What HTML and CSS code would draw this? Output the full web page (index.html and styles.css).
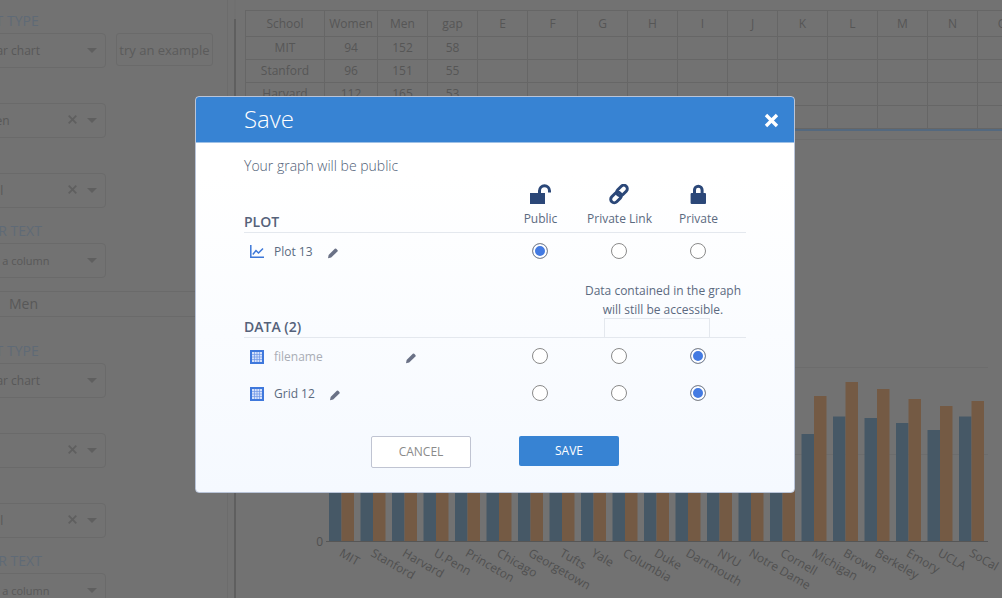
FILE: index.html
```html
<!DOCTYPE html>
<html>
	<head>
		<meta http-equiv="Content-Type" content="text/html; charset=UTF-8" />
		<title>Save</title>
		<link rel="stylesheet" href="styles.css">
	</head>

	<body>
		<div class="page">
			<aside class="sidebar">
				<div class="sidebar-inner">
					<div class="field">
						<div class="field-label">PLOT TYPE</div>
						<div class="field-row">
							<div class="select select-type"><span class="value">Basic bar chart</span><i class="caret"></i></div>
							<button class="example">try an example</button>
						</div>
					</div>
					<div class="field">
						<div class="field-label">X</div>
						<div class="select"><span class="value">Women</span>
							<svg class="clear" width="9" height="9" viewBox="0 0 9 9"><path d="M.7.7l7.6 7.6M8.3.7L.7 8.3" /></svg><i class="caret"></i></div>
					</div>
					<div class="field">
						<div class="field-label">Y</div>
						<div class="select"><span class="value">School</span>
							<svg class="clear" width="9" height="9" viewBox="0 0 9 9"><path d="M.7.7l7.6 7.6M8.3.7L.7 8.3" /></svg><i class="caret"></i></div>
					</div>
					<div class="field">
						<div class="field-label field-label-hover">HOVER TEXT</div>
						<div class="select"><span class="value placeholder">Select a column</span><i class="caret"></i></div>
					</div>
					<div class="trace-name">Men</div>
					<div class="field">
						<div class="field-label">PLOT TYPE</div>
						<div class="field-row">
							<div class="select select-type"><span class="value">Basic bar chart</span><i class="caret"></i></div>
						</div>
					</div>
					<div class="field">
						<div class="field-label">X</div>
						<div class="select"><span class="value">Men</span>
							<svg class="clear" width="9" height="9" viewBox="0 0 9 9"><path d="M.7.7l7.6 7.6M8.3.7L.7 8.3" /></svg><i class="caret"></i></div>
					</div>
					<div class="field">
						<div class="field-label">Y</div>
						<div class="select"><span class="value">School</span>
							<svg class="clear" width="9" height="9" viewBox="0 0 9 9"><path d="M.7.7l7.6 7.6M8.3.7L.7 8.3" /></svg><i class="caret"></i></div>
					</div>
					<div class="field">
						<div class="field-label field-label-hover">HOVER TEXT</div>
						<div class="select"><span class="value placeholder">Select a column</span><i class="caret"></i></div>
					</div>
				</div>
			</aside>
			<div class="scrollbar"></div>

			<main class="workspace">
				<table class="sheet">
					<tr><th>School</th><th>Women</th><th>Men</th><th>gap</th><th>E</th><th>F</th><th>G</th><th>H</th><th>I</th><th>J</th><th>K</th><th>L</th><th>M</th><th>N</th><th>O</th></tr>
					<tr><td>MIT</td><td>94</td><td>152</td><td>58</td><td></td><td></td><td></td><td></td><td></td><td></td><td></td><td></td><td></td><td></td><td></td></tr>
					<tr><td>Stanford</td><td>96</td><td>151</td><td>55</td><td></td><td></td><td></td><td></td><td></td><td></td><td></td><td></td><td></td><td></td><td></td></tr>
					<tr><td>Harvard</td><td>112</td><td>165</td><td>53</td><td></td><td></td><td></td><td></td><td></td><td></td><td></td><td></td><td></td><td></td><td></td></tr>
					<tr><td>U.Penn</td><td>92</td><td>141</td><td>49</td><td></td><td></td><td></td><td></td><td></td><td></td><td></td><td></td><td></td><td></td><td></td></tr>
				</table>
				<div class="sheet-handle"></div>

				<svg class="chart" width="766" height="458" viewBox="236 140 766 458">
					<g class="grid-lines">
						<path d="M329 367.5H988M329 454.5H988" />
					</g>
					<g class="bars-women">
						<rect x="329" y="459" width="12.5" height="82" />
						<rect x="360.5" y="457" width="12.5" height="84" />
						<rect x="392" y="444" width="12.5" height="97" />
						<rect x="423.5" y="461" width="12.5" height="80" />
						<rect x="455" y="463" width="12.5" height="78" />
						<rect x="486.5" y="473" width="12.5" height="68" />
						<rect x="518" y="459" width="12.5" height="82" />
						<rect x="549.5" y="475" width="12.5" height="66" />
						<rect x="581" y="472" width="12.5" height="69" />
						<rect x="612.5" y="466" width="12.5" height="75" />
						<rect x="644" y="460" width="12.5" height="81" />
						<rect x="675.5" y="468" width="12.5" height="73" />
						<rect x="707" y="483" width="12.5" height="58" />
						<rect x="738.5" y="477" width="12.5" height="64" />
						<rect x="770" y="478" width="12.5" height="63" />
						<rect x="801.5" y="434" width="12.5" height="107" />
						<rect x="833" y="416.5" width="12.5" height="124.5" />
						<rect x="864.5" y="418" width="12.5" height="123" />
						<rect x="896" y="423" width="12.5" height="118" />
						<rect x="927.5" y="430" width="12.5" height="111" />
						<rect x="959" y="416.5" width="12.5" height="124.5" />
					</g>
					<g class="bars-men">
						<rect x="341.5" y="409" width="12.5" height="132" />
						<rect x="373" y="410" width="12.5" height="131" />
						<rect x="404.5" y="397" width="12.5" height="144" />
						<rect x="436" y="418" width="12.5" height="123" />
						<rect x="467.5" y="422" width="12.5" height="119" />
						<rect x="499" y="438" width="12.5" height="103" />
						<rect x="530.5" y="427" width="12.5" height="114" />
						<rect x="562" y="444" width="12.5" height="97" />
						<rect x="593.5" y="442" width="12.5" height="99" />
						<rect x="625" y="437" width="12.5" height="104" />
						<rect x="656.5" y="433" width="12.5" height="108" />
						<rect x="688" y="442" width="12.5" height="99" />
						<rect x="719.5" y="459" width="12.5" height="82" />
						<rect x="751" y="454" width="12.5" height="87" />
						<rect x="782.5" y="455" width="12.5" height="86" />
						<rect x="814" y="396" width="12.5" height="145" />
						<rect x="845.5" y="382" width="12.5" height="159" />
						<rect x="877" y="389" width="12.5" height="152" />
						<rect x="908.5" y="399" width="12.5" height="142" />
						<rect x="940" y="406" width="12.5" height="135" />
						<rect x="971.5" y="401" width="12.5" height="140" />
					</g>
					<path class="axis" d="M326 541.5H988" />
					<g class="tick-labels">
						<text x="323" y="546" text-anchor="end">0</text>
						<text transform="translate(338.5 555.5) rotate(30)">MIT</text>
						<text transform="translate(370 555.5) rotate(30)">Stanford</text>
						<text transform="translate(401.5 555.5) rotate(30)">Harvard</text>
						<text transform="translate(433 555.5) rotate(30)">U.Penn</text>
						<text transform="translate(464.5 555.5) rotate(30)">Princeton</text>
						<text transform="translate(496 555.5) rotate(30)">Chicago</text>
						<text transform="translate(527.5 555.5) rotate(30)">Georgetown</text>
						<text transform="translate(559 555.5) rotate(30)">Tufts</text>
						<text transform="translate(590.5 555.5) rotate(30)">Yale</text>
						<text transform="translate(622 555.5) rotate(30)">Columbia</text>
						<text transform="translate(653.5 555.5) rotate(30)">Duke</text>
						<text transform="translate(685 555.5) rotate(30)">Dartmouth</text>
						<text transform="translate(716.5 555.5) rotate(30)">NYU</text>
						<text transform="translate(748 555.5) rotate(30)">Notre Dame</text>
						<text transform="translate(779.5 555.5) rotate(30)">Cornell</text>
						<text transform="translate(811 555.5) rotate(30)">Michigan</text>
						<text transform="translate(842.5 555.5) rotate(30)">Brown</text>
						<text transform="translate(874 555.5) rotate(30)">Berkeley</text>
						<text transform="translate(905.5 555.5) rotate(30)">Emory</text>
						<text transform="translate(937 555.5) rotate(30)">UCLA</text>
						<text transform="translate(968.5 555.5) rotate(30)">SoCal</text>
					</g>
				</svg>
			</main>
		</div>

		<section class="modal">
			<header class="modal-header">
				<h1>Save</h1>
				<svg class="close" width="15" height="15" viewBox="0 0 15 15"><path d="M2 2l11 11M13 2L2 13" /></svg>
			</header>
			<div class="modal-body">
				<p class="intro">Your graph will be public</p>

				<div class="row row-head">
					<h2>PLOT</h2>
					<div class="privacy">
						<svg width="24" height="21" viewBox="0 0 24 21"><rect class="solid" x="2" y="9" width="15" height="11" /><path class="line" d="M11.5 9V6.8a5 5 0 0 1 10 0V8.5" /></svg>
						<span>Public</span>
					</div>
					<div class="privacy">
						<svg width="24" height="21" viewBox="0 0 24 21"><rect class="line" x="3" y="10" width="12" height="7" rx="3.5" transform="rotate(-45 9 13.5)" /><rect class="line" x="9" y="3" width="12" height="7" rx="3.5" transform="rotate(-45 15 6.5)" /></svg>
						<span>Private Link</span>
					</div>
					<div class="privacy">
						<svg width="24" height="21" viewBox="0 0 24 21"><rect class="solid" x="4.6" y="9" width="15.4" height="11" rx="1" /><path class="line" d="M8.5 9V6a3.8 3.8 0 0 1 7.6 0V9" /></svg>
						<span>Private</span>
					</div>
				</div>

				<div class="row row-item">
					<div class="item">
						<svg class="item-icon" width="14" height="14" viewBox="0 0 14 14"><path d="M.8 0V12.2H14M2.8 9.5L6 5.5L8.5 8L13 3.5" /></svg>
						<span>Plot 13</span>
						<svg class="pencil" width="12" height="12" viewBox="0 0 12 12"><path d="M1 11.2L1.6 8L7.8 1.8a1 1 0 0 1 1.4 0L10.4 3a1 1 0 0 1 0 1.4L4.2 10.6Z" /></svg>
					</div>
					<input type="radio" name="plot" checked />
					<input type="radio" name="plot" />
					<input type="radio" name="plot" />
				</div>

				<div class="row row-data">
					<h2>DATA (2)</h2>
					<div class="note">
						Data contained in the graph<br />will still be accessible.
						<div class="note-bracket"></div>
					</div>
				</div>

				<div class="row row-item">
					<div class="item">
						<svg width="14" height="14" viewBox="0 0 14 14"><rect class="grid-box" width="14" height="14" /><rect class="grid-fill" x="2" y="2" width="10" height="10" /><path class="grid-cells" d="M4.5 2V12M7 2V12M9.5 2V12M2 4.5H12M2 7H12M2 9.5H12" /></svg>
						<span class="filename">filename</span>
						<svg class="pencil" width="12" height="12" viewBox="0 0 12 12"><path d="M1 11.2L1.6 8L7.8 1.8a1 1 0 0 1 1.4 0L10.4 3a1 1 0 0 1 0 1.4L4.2 10.6Z" /></svg>
					</div>
					<input type="radio" name="data1" />
					<input type="radio" name="data1" />
					<input type="radio" name="data1" checked />
				</div>

				<div class="row row-item">
					<div class="item">
						<svg width="14" height="14" viewBox="0 0 14 14"><rect class="grid-box" width="14" height="14" /><rect class="grid-fill" x="2" y="2" width="10" height="10" /><path class="grid-cells" d="M4.5 2V12M7 2V12M9.5 2V12M2 4.5H12M2 7H12M2 9.5H12" /></svg>
						<span>Grid 12</span>
						<svg class="pencil" width="12" height="12" viewBox="0 0 12 12"><path d="M1 11.2L1.6 8L7.8 1.8a1 1 0 0 1 1.4 0L10.4 3a1 1 0 0 1 0 1.4L4.2 10.6Z" /></svg>
					</div>
					<input type="radio" name="data2" />
					<input type="radio" name="data2" />
					<input type="radio" name="data2" checked />
				</div>

				<div class="actions">
					<button class="btn btn-cancel">CANCEL</button>
					<button class="btn btn-save">SAVE</button>
				</div>
			</div>
		</section>
	</body>
</html>
```

FILE: styles.css
```css
html, body {
	height: 100%;
	margin: 0;
	overflow: hidden;
}
body {
	background-color: #727272;
	color: #585858;
	font-family: "Open Sans", sans-serif;
}
.page {
	display: flex;
	height: 598px;
	overflow: hidden;
}

/* left panel, scrolled sideways so it is cut off */
.sidebar {
	border-right: 1px solid #6c6c6c;
	flex: none;
	height: 100%;
	overflow: hidden;
	width: 227px;
}
.sidebar-inner {
	margin-left: -64px;
	margin-top: -2px;
	width: 291px;
}
.field-label {
	color: #5f6a76;
	font-size: 14px;
	height: 35px;
	line-height: 46px;
	padding-left: 33px;
}
.field-label-hover {
	padding-left: 25px;
}
.field-row {
	align-items: flex-start;
	display: flex;
	gap: 10px;
}
.select {
	align-items: center;
	border: 1px solid #6a6a6a;
	border-radius: 4px;
	box-sizing: border-box;
	display: flex;
	flex: none;
	font-size: 12px;
	height: 35px;
	padding-left: 29px;
	position: relative;
	width: 170px;
}
.select-type {
	padding-left: 20px;
}
.value {
	flex: 1;
}
.placeholder {
	font-size: 11px;
	margin-left: 3px;
}
.clear {
	fill: none;
	margin-bottom: 3px;
	margin-right: 10px;
	stroke: #5f5f5f;
	stroke-width: 1.8;
}
.caret {
	border-left: 5px solid transparent;
	border-right: 5px solid transparent;
	border-top: 5px solid #5f5f5f;
	margin-right: 8px;
}
.example {
	background: none;
	border: 1px solid #6a6a6a;
	border-radius: 3px;
	color: #5b5b5b;
	flex: none;
	font-family: inherit;
	font-size: 13px;
	height: 33px;
	padding: 0;
	white-space: nowrap;
	width: 97px;
}
.trace-name {
	border-bottom: 1px solid #6a6a6a;
	border-top: 1px solid #6a6a6a;
	box-sizing: border-box;
	font-size: 14px;
	height: 26px;
	line-height: 24px;
	margin: 13px 0 11px;
	padding-left: 73px;
}
.scrollbar {
	background: linear-gradient(#707070 19px, #5f5f5f 19px);
	flex: none;
	height: 100%;
	margin-left: 6px;
	width: 2px;
}

/* sheet and chart */
.workspace {
	flex: 1;
	min-width: 0;
	overflow: hidden;
}
.sheet {
	border-collapse: collapse;
	font-size: 12px;
	margin: 10px 0 0 9px;
	table-layout: fixed;
	width: 782px;
}
.sheet th, .sheet td {
	border: 1px solid #666;
	color: #565656;
	font-weight: 400;
	height: 21px;
	padding: 0 0 1px;
	text-align: center;
	width: 49px;
}
.sheet th {
	height: 24px;
}
.sheet th:nth-child(1) {
	width: 78px;
}
.sheet th:nth-child(2) {
	width: 52px;
}
.sheet-handle {
	border-bottom: 1px solid #6c6c6c;
	border-top: 2px solid #54697f;
	height: 8px;
}
.chart {
	display: block;
}
.grid-lines path {
	fill: none;
	stroke: #6c6c6c;
}
.bars-women rect {
	fill: #465866;
}
.bars-men rect {
	fill: #745a44;
}
.axis {
	fill: none;
	stroke: #565656;
}
.tick-labels text {
	fill: #505050;
	font-size: 12px;
}

/* save dialog */
.modal {
	background: linear-gradient(#fff 20%, #f5f9ff);
	border: 1px solid #b9c4d8;
	border-radius: 4px;
	box-sizing: border-box;
	height: 397px;
	left: 195px;
	overflow: hidden;
	position: absolute;
	top: 96px;
	width: 600px;
}
.modal-header {
	align-items: center;
	background-color: #3783d3;
	border-bottom: 1px solid #9fc1e6;
	box-sizing: border-box;
	display: flex;
	height: 46px;
	justify-content: space-between;
	padding: 0 15px 0 48px;
}
.modal-header h1 {
	color: #fff;
	font-size: 24px;
	font-weight: 300;
	margin: -2px 0 0;
}
.close {
	fill: none;
	margin-top: 1px;
	stroke: #fff;
	stroke-width: 3.4;
}
.modal-body {
	color: #5b6a80;
	padding: 0 48px;
}
.intro {
	color: #4f5e76;
	font-size: 14px;
	font-weight: 300;
	height: 20px;
	line-height: 20px;
	margin: 13px 0 0;
}
.row {
	display: grid;
	grid-template-columns: 257px 79px 79px 79px 8px;
}
.row h2 {
	color: #55627a;
	font-size: 14px;
	font-weight: 600;
	margin: 0;
}
.row-head {
	border-bottom: 1px solid #e4e8ee;
	height: 56px;
}
.row-head h2 {
	align-self: end;
	line-height: 20px;
}
.privacy {
	align-items: center;
	display: flex;
	flex-direction: column;
	font-size: 12px;
	padding-top: 8px;
}
.privacy svg {
	margin: 0 1px 5px 0;
}
.solid {
	fill: #2b4778;
}
.line {
	fill: none;
	stroke: #2b4778;
	stroke-width: 3;
}
.row-item {
	align-items: center;
	height: 37px;
}
.row-item input {
	appearance: none;
	background-color: #fff;
	border: 1px solid #8a8a8a;
	border-radius: 50%;
	box-sizing: border-box;
	height: 16px;
	justify-self: center;
	margin: 0 2px 1px 0;
	width: 16px;
}
.row-item input:checked {
	background-color: #437ae2;
	box-shadow: inset 0 0 0 2px #fff;
}
.item {
	align-items: center;
	display: flex;
	font-size: 12px;
	margin-bottom: 1px;
	padding-left: 6px;
}
.item svg:first-child {
	margin-top: 2px;
}
.item span {
	margin-left: 10px;
}
.item-icon {
	fill: none;
	stroke: #3c77d8;
	stroke-width: 1.5;
}
.filename {
	color: #a9adb5;
	width: 131px;
}
.pencil {
	fill: #6a7186;
	margin: 3px 0 0 14px;
}
.filename + .pencil {
	margin-left: 0;
}
.grid-box {
	fill: #3f78dc;
}
.grid-fill {
	fill: #d5e1fa;
}
.grid-cells {
	fill: none;
	stroke: #6f97e6;
	stroke-width: .7;
}
.row-data {
	border-bottom: 1px solid #e4e8ee;
	height: 67px;
}
.row-data h2 {
	align-self: end;
	line-height: 20px;
}
.note {
	font-size: 12px;
	grid-column: 3 / -1;
	line-height: 19px;
	padding-top: 11px;
	text-align: center;
}
.note-bracket {
	border: 1px solid #e4e8ee;
	border-bottom: none;
	box-sizing: border-box;
	height: 19px;
	margin: -1px 0 0 24px;
	width: 106px;
}
.actions {
	align-items: flex-start;
	display: flex;
	gap: 48px;
	margin-top: 24px;
	padding-left: 127px;
}
.btn {
	border-radius: 2px;
	box-sizing: border-box;
	font-family: inherit;
	font-size: 12px;
	padding: 0 0 2px;
	width: 100px;
}
.btn-cancel {
	background-color: #fff;
	border: 1px solid #c0c4d2;
	color: #8a8a8a;
	height: 32px;
}
.btn-save {
	background-color: #3783d3;
	border: none;
	color: #fff;
	height: 30px;
}
```
